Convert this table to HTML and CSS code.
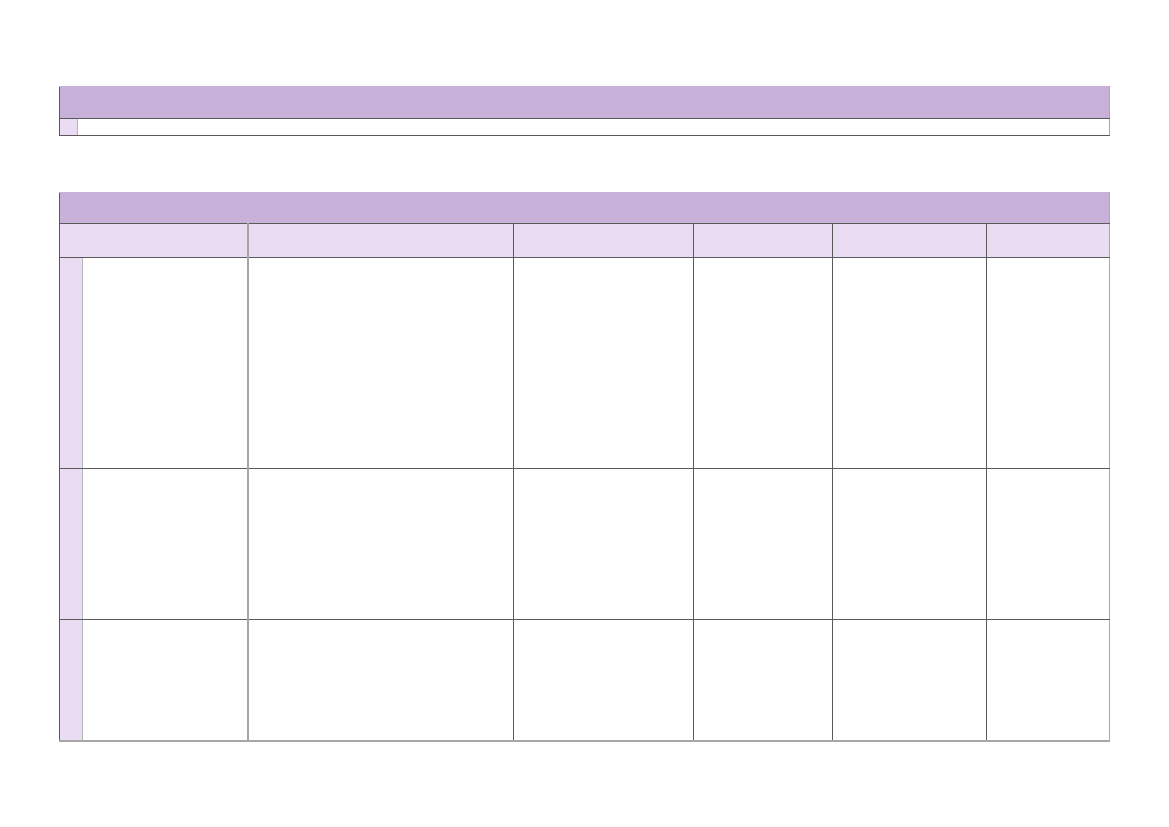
FILE: index.html
```html
<!DOCTYPE html>
<html lang="en">
<head>
  <meta charset="UTF-8" />
  <meta name="viewport" content="width=device-width, initial-scale=1" />
  <title>Plan</title>
  <link rel="stylesheet" href="styles.css">
</head>
<body>
  <div class="page">
    <table class="sheet summary">
      <colgroup>
        <col class="c-mark" />
        <col />
      </colgroup>
      <tr class="title-row">
        <th colspan="2"></th>
      </tr>
      <tr class="line-row">
        <td class="mark"></td>
        <td class="blank"></td>
      </tr>
    </table>

    <table class="sheet grid">
      <colgroup>
        <col class="c-side" />
        <col class="c-a" />
        <col class="c-b" />
        <col class="c-c" />
        <col class="c-d" />
        <col class="c-e" />
        <col class="c-f" />
      </colgroup>
      <tr class="title-row">
        <th colspan="7"></th>
      </tr>
      <tr class="head-row">
        <td colspan="2" class="soft-right"></td>
        <td></td>
        <td></td>
        <td></td>
        <td></td>
        <td class="edge"></td>
      </tr>
      <tr class="row-1">
        <td class="side"></td>
        <td class="soft-right"></td>
        <td></td>
        <td></td>
        <td></td>
        <td></td>
        <td class="edge"></td>
      </tr>
      <tr class="row-2">
        <td class="side"></td>
        <td class="soft-right"></td>
        <td></td>
        <td></td>
        <td></td>
        <td></td>
        <td class="edge"></td>
      </tr>
      <tr class="row-3">
        <td class="side"></td>
        <td class="soft-right"></td>
        <td></td>
        <td></td>
        <td></td>
        <td></td>
        <td class="edge"></td>
      </tr>
    </table>
  </div>
</body>
</html>
```

FILE: styles.css
```css
/* Page */
body {
  margin: 0;
  background-color: #ffffff;
  font-family: "Liberation Sans", Arial, sans-serif;
}

.page {
  padding: 86px 0 0 59px;
  display: flex;
  flex-direction: column;
  gap: 56px;
}

/* Shared table look */
.sheet {
  width: 1051px;
  border-collapse: collapse;
  table-layout: fixed;
  border-left: 1px solid #222;
}

.sheet th,
.sheet td {
  padding: 0;
  border: 1px solid #5a5a5a;
}

.sheet .title-row th {
  background-color: #c8b1d8;
  border-top: 1px solid #c8b1d8;
  border-right: 1px solid #a8a8a8;
}

/* Top summary block */
.summary .c-mark {
  width: 18px;
}

.summary .title-row {
  height: 32px;
}

.summary .line-row {
  height: 17px;
}

.summary .mark {
  background-color: #eadcf3;
  border-right: 1px solid #b4b4b4;
}

.summary .blank {
  border-right: 1px solid #a8a8a8;
}

/* Main grid */
.grid .c-side { width: 23px; }
.grid .c-a { width: 165px; }
.grid .c-b { width: 266px; }
.grid .c-c { width: 180px; }
.grid .c-d { width: 139px; }
.grid .c-e { width: 154px; }
.grid .c-f { width: 123px; }

.grid .title-row {
  height: 31px;
}

.grid .head-row {
  height: 34px;
}

.grid .head-row td {
  background-color: #eadcf3;
}

.grid .row-1 { height: 211px; }
.grid .row-2 { height: 151px; }
.grid .row-3 { height: 121px; }

.grid .side {
  background-color: #eadcf3;
  border-right: 1px solid #b4b4b4;
}

.grid .soft-right {
  border-right: 2px solid #a6a6a6;
}

.grid .edge {
  border-right: 1px solid #a8a8a8;
}

.grid .row-3 td {
  border-bottom: 2px solid #a6a6a6;
}
```
